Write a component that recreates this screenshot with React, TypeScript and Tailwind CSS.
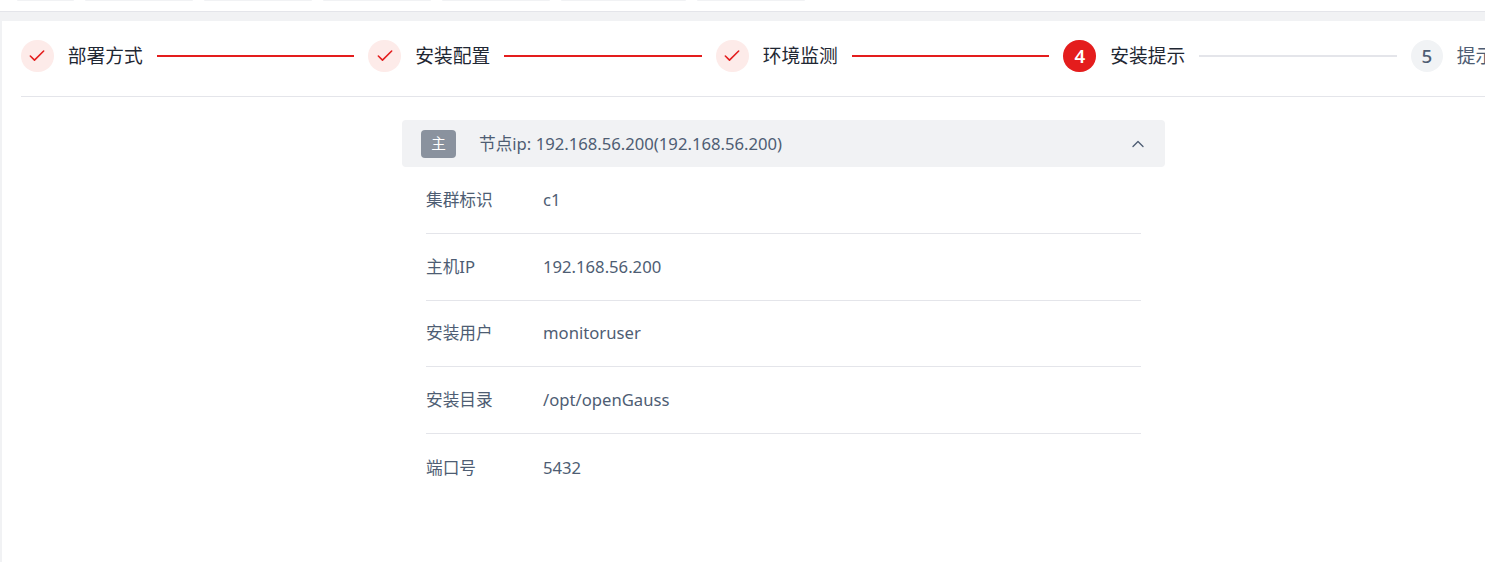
import { ChevronUp, Check } from 'lucide-react'

const tabs = [57, 108, 108, 108, 108, 125, 108]

const steps = [
  { label: '部署方式', state: 'done' },
  { label: '安装配置', state: 'done' },
  { label: '环境监测', state: 'done' },
  { label: '安装提示', state: 'active' },
  { label: '提示', state: 'todo' },
]

const rows = [
  { label: '集群标识', value: 'c1' },
  { label: '主机IP', value: '192.168.56.200' },
  { label: '安装用户', value: 'monitoruser' },
  { label: '安装目录', value: '/opt/openGauss' },
  { label: '端口号', value: '5432' },
]

function StepIcon({ state, index }: { state: string; index: number }) {
  if (state === 'done') {
    return (
      <div className="flex h-8 w-[33px] shrink-0 items-center justify-center rounded-full bg-[#fdebe9] text-[#e41d1d]">
        <Check size={20} strokeWidth={1.9} />
      </div>
    )
  }
  if (state === 'active') {
    return (
      <div className="flex h-8 w-[33px] shrink-0 items-center justify-center rounded-full bg-[#e41d1d] text-[18.75px] font-semibold text-white">
        {index}
      </div>
    )
  }
  return (
    <div className="flex h-8 w-8 shrink-0 items-center justify-center rounded-full bg-[#f1f3f5] text-[18.75px] font-medium text-[#4e5d73]">
      {index}
    </div>
  )
}

export default function App() {
  return (
    <div className="flex h-[562px] w-[1485px] flex-col overflow-hidden bg-[#f1f2f4] font-['Noto_Sans','Noto_Sans_CJK_SC',sans-serif]">
      {/* tab bar, only the bottom of it shows */}
      <div className="flex h-3 shrink-0 gap-[11px] border-b border-[#e4e5ea] bg-white pl-[17px]">
        {tabs.map((w, i) => (
          <div key={i} className="h-px rounded-b bg-[#f1f2f4]" style={{ width: w }} />
        ))}
      </div>

      <div className="mt-[9px] ml-[2px] flex-1 bg-white pl-[19px]">
        {/* steps */}
        <div className="flex h-[76px] items-center gap-[14px] border-b border-[#e4e5ea] pb-[5px] pl-0 whitespace-nowrap">
          {steps.map((s, i) => (
            <div key={s.label} className={`flex items-center gap-[14px] ${i === 0 ? '-ml-[0.25px]' : ''}`}>
              <StepIcon state={s.state} index={i + 1} />
              <span className={`text-[18.75px] leading-7 ${s.state === 'todo' ? 'text-[#4e5d73]' : 'text-[#1f2733]'}`}>
                {s.label}
              </span>
              {i < steps.length - 1 && (
                <div className={`h-0.5 w-[197.5px] ${s.state === 'done' ? 'bg-[#e41d1d]' : 'bg-[#e4e5ea]'}`} />
              )}
            </div>
          ))}
        </div>

        {/* node panel */}
        <div className="mt-[23px] ml-[381px] w-[763px]">
          <div className="flex h-[47px] items-center rounded bg-[#f1f2f4] pr-[17px] pl-[19px] text-[16.67px] text-[#4e5d73]">
            <span className="flex h-7 w-[35px] items-center justify-center rounded-sm bg-[#8a929e] text-[14.6px] text-white">
              主
            </span>
            <span className="ml-[23px] flex-1 pb-px">节点ip: 192.168.56.200(192.168.56.200)</span>
            <ChevronUp size={20} strokeWidth={1.6} />
          </div>

          <div className="mx-6">
            {rows.map((r, i) => (
              <div
                key={r.label}
                className={`flex h-[66.8px] items-center pb-px text-[16.67px] text-[#4e5d73] ${i < rows.length - 1 ? 'border-b border-[#e4e5ea]' : ''}`}
              >
                <span className="w-[117px]">{r.label}</span>
                <span>{r.value}</span>
              </div>
            ))}
          </div>
        </div>
      </div>
    </div>
  )
}
